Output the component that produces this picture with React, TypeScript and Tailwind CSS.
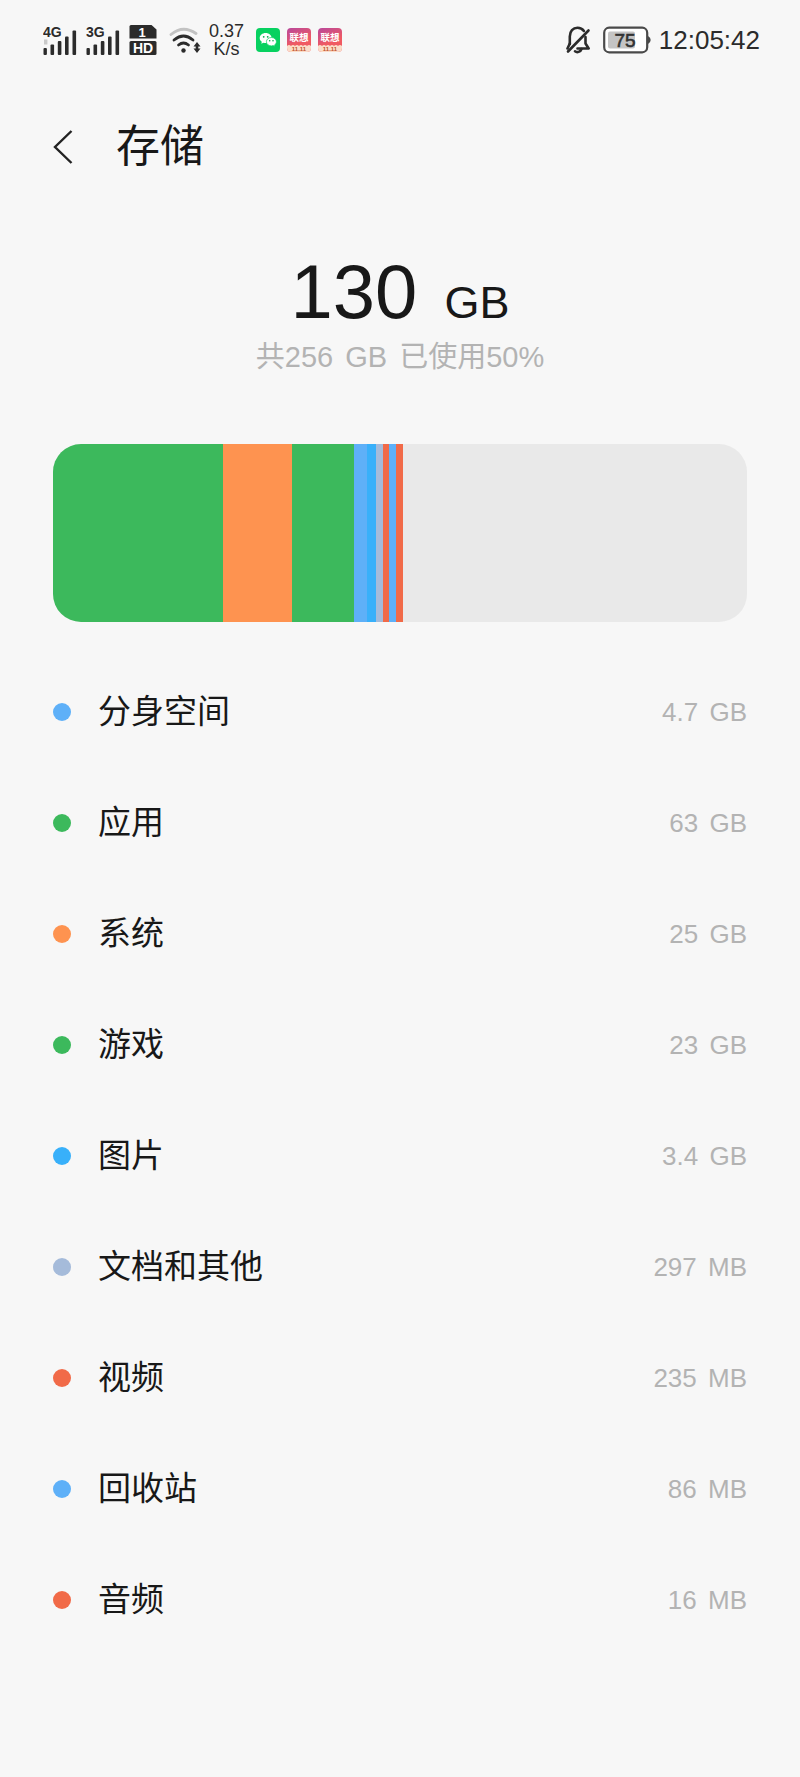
const total = 694;

// share is the drawn width out of total; tiny categories keep a visible sliver
const items = [
  { id: "clone", name: "分身空间", value: "4.7", unit: "GB", dot: "bg-[#5eb0f8]" },
  { id: "apps", name: "应用", value: "63", unit: "GB", dot: "bg-[#3cb95c]" },
  { id: "system", name: "系统", value: "25", unit: "GB", dot: "bg-[#fe9350]" },
  { id: "games", name: "游戏", value: "23", unit: "GB", dot: "bg-[#3cb95c]" },
  { id: "images", name: "图片", value: "3.4", unit: "GB", dot: "bg-[#38b0fa]" },
  { id: "docs", name: "文档和其他", value: "297", unit: "MB", dot: "bg-[#a5bbda]" },
  { id: "video", name: "视频", value: "235", unit: "MB", dot: "bg-[#f16a48]" },
  { id: "trash", name: "回收站", value: "86", unit: "MB", dot: "bg-[#5eb0f8]" },
  { id: "audio", name: "音频", value: "16", unit: "MB", dot: "bg-[#f16a48]" },
];

const segments = [
  { id: "apps", share: 170, color: "bg-[#3cb95c]" },
  { id: "system", share: 69, color: "bg-[#fe9350]" },
  { id: "games", share: 62, color: "bg-[#3cb95c]" },
  { id: "clone", share: 13, color: "bg-[#5eb0f8]" },
  { id: "images", share: 9, color: "bg-[#38b0fa]" },
  { id: "docs", share: 7, color: "bg-[#a5bbda]" },
  { id: "video", share: 6, color: "bg-[#f16a48]" },
  { id: "trash", share: 7, color: "bg-[#5eb0f8]" },
  { id: "audio", share: 7, color: "bg-[#f16a48]" },
];

function Signal({ label, roaming }: { label: string; roaming?: boolean }) {
  return (
    <svg width="34" height="30" viewBox="0 0 34 30" fill="#2b2b2b">
      <text x="0" y="12" fontSize="14" fontWeight="700">{label}</text>
      {roaming && <path d="M1 14.5h3.4v5H1z" fill="#c9c9c9" />}
      <rect x="0.5" y="23" width="3.4" height="7" rx="1" />
      <rect x="7.5" y="19.500" width="3.600" height="10.500" rx="1" />
      <rect x="14.800" y="16" width="3.600" height="14" rx="1" />
      <rect x="22" y="11.500" width="3.600" height="18.500" rx="1" />
      <rect x="29.500" y="5.500" width="3.600" height="24.500" rx="1" />
    </svg>
  );
}

function SimHd() {
  return (
    <svg width="28" height="30" viewBox="0 0 28 30" fill="#2b2b2b">
      <path d="M2 0h20.500l5 4.500V13.500H0.500V1.500Q0.500 0 2 0z" />
      <rect x="0.500" y="16" width="27" height="14" rx="1.500" />
      <text x="13" y="11.500" fontSize="13" fontWeight="700" fill="#fff" textAnchor="middle">1</text>
      <text x="14" y="28" fontSize="14" fontWeight="700" fill="#fff" textAnchor="middle">HD</text>
    </svg>
  );
}

function Wifi() {
  return (
    <svg width="32" height="30" viewBox="0 0 32 30" fill="none" strokeWidth="2.800" strokeLinecap="round">
      <path d="M2 9.500Q14 -0.500 27 8.500" stroke="#c2c2c2" />
      <path d="M5 15Q14.500 7 24 15" stroke="#2b2b2b" />
      <path d="M9.500 20Q14.500 16 19.500 20" stroke="#2b2b2b" />
      <circle cx="14.500" cy="25.500" r="2.200" fill="#2b2b2b" />
      <path d="M28 17l3.500 4.500h-2.200v2h2.200L28 28l-3.500-4.500h2.200v-2h-2.200z" fill="#2b2b2b" />
    </svg>
  );
}

function WeChat() {
  return (
    <svg width="24" height="24" viewBox="0 0 24 24">
      <rect width="24" height="24" rx="4" fill="#07d160" />
      <path d="M9.700 5C6.300 5 3.700 7.200 3.700 10c0 1.600.8 2.900 2.100 3.800l-.5 2 2.200-1.100c.7.200 1.500.3 2.200.3 3.300 0 5.900-2.200 5.900-5s-2.600-5-5.900-5z" fill="#fff" />
      <path d="M15.400 9.500c-2.900 0-5 1.900-5 4.200s2.100 4.200 5 4.200c.6 0 1.200-.1 1.800-.3l1.800 1-.4-1.700c1.100-.8 1.800-1.900 1.800-3.200 0-2.300-2.100-4.200-5-4.200z" fill="#fff" stroke="#07d160" strokeWidth="0.700" />
      <g fill="#07a850">
        <circle cx="7.700" cy="8.800" r="0.900" />
        <circle cx="11.700" cy="8.800" r="0.900" />
        <circle cx="13.700" cy="12.700" r="0.800" />
        <circle cx="17" cy="12.700" r="0.800" />
      </g>
    </svg>
  );
}

function Lenovo({ id }: { id: string }) {
  return (
    <svg width="24" height="24" viewBox="0 0 24 24">
      <defs>
        <linearGradient id={id} x1="0" y1="0" x2="0.400" y2="1">
          <stop offset="0" stopColor="#b8489c" />
          <stop offset="0.700" stopColor="#f05a62" />
        </linearGradient>
      </defs>
      <rect width="24" height="24" rx="4" fill={`url(#${id})`} />
      <path d="M0 18q2-2 4 0 2-2 4 0 2-2 4 0 2-2 4 0 2-2 4 0 2-2 4 0v2q0 4-4 4H4q-4 0-4-4z" fill="#fbdcc8" />
      <text x="12" y="13" fontSize="9.500" fontWeight="700" fill="#fff" textAnchor="middle">联想</text>
      <text x="12" y="23" fontSize="6" fontWeight="700" fill="#c0542c" textAnchor="middle">11.11</text>
    </svg>
  );
}

function BellOff() {
  return (
    <svg width="25" height="28" viewBox="0 0 25 28" fill="none" stroke="#2b2b2b" strokeWidth="2.600" strokeLinecap="round" strokeLinejoin="round">
      <path d="M3.800 18V10.500C3.800 5 7 1.800 11.500 1.800c2.800 0 5 1.200 6.400 3.200" />
      <path d="M19.500 11v6.500l3.200 5H11.500" />
      <path d="M3.800 17.500L1.500 22.500" />
      <path d="M22.500 4.500L2 25.500" />
      <path d="M9 25.300c2 1.500 5.500.8 6.500-2.300" />
    </svg>
  );
}

function Battery({ level }: { level: number }) {
  return (
    <svg width="48" height="28" viewBox="0 0 48 28">
      <rect x="1.200" y="1.700" width="43" height="24.600" rx="5" fill="#fff" stroke="#4a4a4a" strokeWidth="2.200" />
      <path d="M45 10q2.700 1.500 2.700 4T45 18z" fill="#4a4a4a" />
      <rect x="5" y="5.500" width={level * 0.36} height="17" rx="2" fill="#c4c4c4" />
      <text x="22" y="20.500" fontSize="19" fill="#333" stroke="#333" strokeWidth="0.600" textAnchor="middle">{level}</text>
    </svg>
  );
}

function StatusBar() {
  return (
    <div className="flex h-20 items-center justify-between pl-[43px] pr-10 text-[#2b2b2b]">
      <div className="flex items-center">
        <div className="flex items-center gap-[9px]">
          <Signal label="4G" roaming />
          <Signal label="3G" />
          <SimHd />
        </div>
        <div className="ml-3 flex items-center gap-2">
          <Wifi />
          <div className="text-center text-[18px] leading-[18px]">
            <div>0.37</div>
            <div>K/s</div>
          </div>
        </div>
        <div className="ml-3 flex items-center gap-[7px]">
          <WeChat />
          <Lenovo id="lenovo-a" />
          <Lenovo id="lenovo-b" />
        </div>
      </div>
      <div className="flex items-center">
        <BellOff />
        <div className="ml-3 mr-2">
          <Battery level={75} />
        </div>
        <time className="text-[26px] leading-8">12:05:42</time>
      </div>
    </div>
  );
}

export default function App() {
  return (
    <div className="min-h-screen bg-[#f7f7f7] font-['Liberation_Sans','Noto_Sans_CJK_SC',sans-serif] text-[#181818]">
      <StatusBar />
      <header className="flex h-[134px] items-center gap-[39px] px-[53px]">
        <button type="button" aria-label="返回" className="flex h-12 w-6 items-center">
          <svg width="24" height="36" viewBox="0 0 24 36" fill="none" stroke="#222" strokeWidth="2.400">
            <path d="M18.500 2L2 18l16.500 16" />
          </svg>
        </button>
        <h1 className="text-[44px] leading-[64px]">存储</h1>
      </header>

      <main className="px-[53px] pb-16">
        <section className="pt-[38px] text-center">
          <p className="text-[76px] leading-[80px]">
            130 <span className="ml-1.5 text-[45px] leading-none">GB</span>
          </p>
          <p className="mt-1 text-[29px] leading-[42px] text-[#b3b3b3]">
            共256 <span className="ml-1">GB</span> <span className="ml-1">已使用50%</span>
          </p>
        </section>

        <div className="mt-[66px] flex h-[178px] overflow-hidden rounded-[28px] bg-[#e9e9e9]">
          {segments.map((s) => (
            <div key={s.id} className={s.color} style={{ width: `${(s.share / total) * 100}%` }} />
          ))}
        </div>

        <ul className="mt-[34px]">
          {items.map((item) => (
            <li key={item.id} className="flex h-[111px] items-center">
              <span className={`h-[18px] w-[18px] rounded-full ${item.dot}`} />
              <span className="ml-[27px] flex-1 text-[33px] leading-[48px]">{item.name}</span>
              <span className="text-[26px] leading-8 text-[#b3b3b3]">
                {item.value} <span className="ml-1">{item.unit}</span>
              </span>
            </li>
          ))}
        </ul>
      </main>
    </div>
  );
}
